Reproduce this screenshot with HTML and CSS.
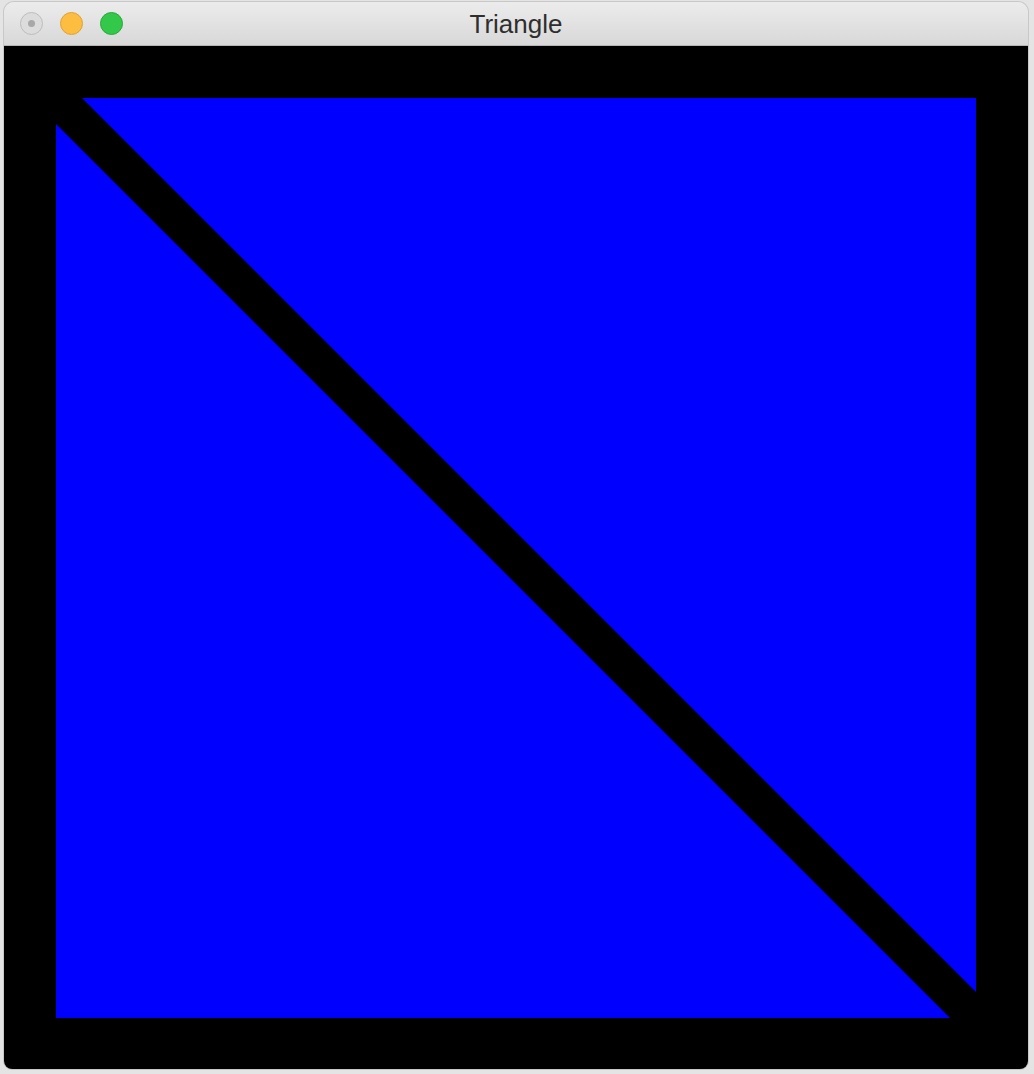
FILE: index.html
```html
<!DOCTYPE html>
<html>
<head>
<meta charset="utf-8">
<title>Triangle</title>
<link rel="stylesheet" href="styles.css">
</head>
<body>
<div class="window">
  <div class="titlebar">
    <div class="lights">
      <span class="light close"><span class="dot"></span></span>
      <span class="light min"></span>
      <span class="light max"></span>
    </div>
    <div class="title">Triangle</div>
  </div>
  <div class="canvas">
    <svg width="1024" height="1023" viewBox="0 0 1024 1023">
      <rect x="0" y="0" width="1024" height="1023" fill="#000"/>
      <polygon points="78,52 972,52 972,946" fill="#0000ff"/>
      <polygon points="52,78 52,972 946,972" fill="#0000ff"/>
    </svg>
  </div>
</div>
</body>
</html>
```
FILE: styles.css
```css
html, body {
  margin: 0;
  padding: 0;
}
body {
  background: #e4e4e4;
  width: 1034px;
  height: 1074px;
  overflow: hidden;
  font-family: "Liberation Sans", Arial, sans-serif;
}
.window {
  margin: 2px 0 0 4px;
  width: 1024px;
  display: flex;
  flex-direction: column;
  border-radius: 10px 10px 8px 8px;
  overflow: hidden;
  box-shadow: 0 0 0 1px rgba(0,0,0,0.12);
}
.titlebar {
  height: 43px;
  border-bottom: 1px solid #b4b4b4;
  background: linear-gradient(#ececec, #d8d8d8);
  display: flex;
  align-items: center;
  position: relative;
}
.lights {
  display: flex;
  gap: 17px;
  padding-left: 16px;
  align-items: center;
}
.light {
  width: 21px;
  height: 21px;
  border-radius: 50%;
  display: flex;
  align-items: center;
  justify-content: center;
}
.close {
  background: #dcdcdc;
  border: 1px solid #bdbdbd;
}
.close .dot {
  width: 7px;
  height: 7px;
  border-radius: 50%;
  background: #a8a8a8;
}
.min {
  background: #fdbd41;
  border: 1px solid #dea236;
}
.max {
  background: #34c84a;
  border: 1px solid #27a93a;
}
.title {
  position: absolute;
  left: 0;
  right: 0;
  top: 0;
  bottom: 0;
  display: flex;
  align-items: center;
  justify-content: center;
  font-size: 26px;
  color: #2e2e2e;
  padding-top: 2px;
}
.canvas {
  height: 1023px;
  line-height: 0;
}
.canvas svg {
  display: block;
}
```
